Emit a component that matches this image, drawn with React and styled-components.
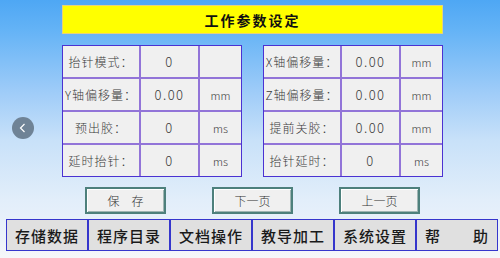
import React from "react";
import styled, { createGlobalStyle } from "styled-components";

const FONT = `"Liberation Serif", "Noto Sans CJK SC", serif`;

const GlobalStyle = createGlobalStyle`
  html, body {
    margin: 0;
    padding: 0;
    width: 500px;
    height: 258px;
    overflow: hidden;
    font-family: ${FONT};
  }
`;

const leftRows = [
  ["抬针模式：", "0", ""],
  ["Y轴偏移量：", "0.00", "mm"],
  ["预出胶：", "0", "ms"],
  ["延时抬针：", "0", "ms"],
];

const rightRows = [
  ["X轴偏移量：", "0.00", "mm"],
  ["Z轴偏移量：", "0.00", "mm"],
  ["提前关胶：", "0.00", "mm"],
  ["抬针延时：", "0", "ms"],
];

const buttons = ["保　存", "下一页", "上一页"];

const tabs = ["存储数据", "程序目录", "文档操作", "教导加工", "系统设置", "帮　　助"];

const App = () => {
  return (
    <>
      <GlobalStyle />
      <Screen>
        <BackButton>
          <svg width="22" height="22" viewBox="0 0 22 22">
            <path d="M12.5 7 L8.5 11 L12.5 15" fill="none" stroke="#fff" strokeWidth="1.2" />
          </svg>
        </BackButton>
        <Main>
          <Title>工作参数设定</Title>
          <Tables>
            {[leftRows, rightRows].map((rows, t) => (
              <ParamTable key={t}>
                {rows.map((row, r) =>
                  row.map((cell, c) => (
                    <Cell key={`${r}-${c}`} $kind={c}>
                      {cell}
                    </Cell>
                  ))
                )}
              </ParamTable>
            ))}
          </Tables>
        </Main>
        <ButtonRow>
          {buttons.map((b) => (
            <ActionButton key={b}>{b}</ActionButton>
          ))}
        </ButtonRow>
        <TabBar>
          {tabs.map((t) => (
            <Tab key={t}>{t}</Tab>
          ))}
        </TabBar>
      </Screen>
    </>
  );
};

const Screen = styled.div`
  position: relative;
  width: 500px;
  height: 258px;
  box-sizing: border-box;
  padding-top: 5px;
  display: flex;
  flex-direction: column;
  background: linear-gradient(
    to bottom,
    #4ea7f4 0px,
    #64b3f6 30px,
    #9dcbf8 90px,
    #c8e1f9 140px,
    #e2eefa 200px,
    #edf3fa 240px,
    #f6f7f9 258px
  );
`;

const BackButton = styled.div`
  position: absolute;
  left: 12px;
  top: 117px;
  width: 22px;
  height: 22px;
  border-radius: 50%;
  background: #6f8396;
  display: flex;
  align-items: center;
  justify-content: center;
`;

const Main = styled.div`
  padding-left: 62px;
  width: 381px;
  display: flex;
  flex-direction: column;
  gap: 11px;
`;

const Title = styled.div`
  height: 29px;
  box-sizing: border-box;
  background: #ffff00;
  border: 1px solid #e6d27a;
  display: flex;
  align-items: center;
  justify-content: center;
  font-family: "Noto Sans CJK SC", serif;
  font-weight: 700;
  font-size: 14px;
  letter-spacing: 2px;
  color: #111;
`;

const Tables = styled.div`
  display: flex;
  gap: 21px;
`;

const ParamTable = styled.div`
  display: grid;
  grid-template-columns: 76px 57px 41px;
  grid-auto-rows: 31px;
  gap: 2px;
  background: #9274d8;
  border: 1px solid #4b32d2;
`;

const Cell = styled.div`
  background: #f0f0f0;
  display: flex;
  align-items: center;
  justify-content: center;
  white-space: nowrap;
  overflow: hidden;
  color: #3a3a3a;
  font-family: "Noto Sans CJK SC", serif;
  font-weight: 300;
  font-size: ${(p) => (p.$kind === 0 ? "12px" : p.$kind === 1 ? "13px" : "11px")};
  letter-spacing: ${(p) => (p.$kind === 0 ? "1px" : p.$kind === 1 ? "1.5px" : "0")};
`;

const ButtonRow = styled.div`
  display: flex;
  gap: 46px;
  padding-left: 85px;
  margin-top: 10px;
`;

const ActionButton = styled.div`
  width: 81px;
  height: 27px;
  box-sizing: border-box;
  background: #f0f0f0;
  border: 2px solid #4d807c;
  box-shadow: inset 1px 1px 0 #ffffff, inset -1px -1px 0 #9fb5b3;
  display: flex;
  align-items: center;
  justify-content: center;
  font-family: "Noto Sans CJK SC", serif;
  font-weight: 300;
  font-size: 12px;
  color: #333;
`;

const TabBar = styled.div`
  margin: 5px 2px 0 6px;
  height: 32px;
  box-sizing: border-box;
  display: grid;
  grid-template-columns: repeat(6, 1fr);
  gap: 2px;
  background: #3636cc;
  border: 1px solid #3636cc;
`;

const Tab = styled.div`
  background: #e0e0e0;
  display: flex;
  align-items: center;
  justify-content: center;
  font-family: "Noto Sans CJK SC", serif;
  font-weight: 500;
  font-size: 15px;
  letter-spacing: 1px;
  color: #1a1a1a;
  white-space: nowrap;
`;

export default App;
